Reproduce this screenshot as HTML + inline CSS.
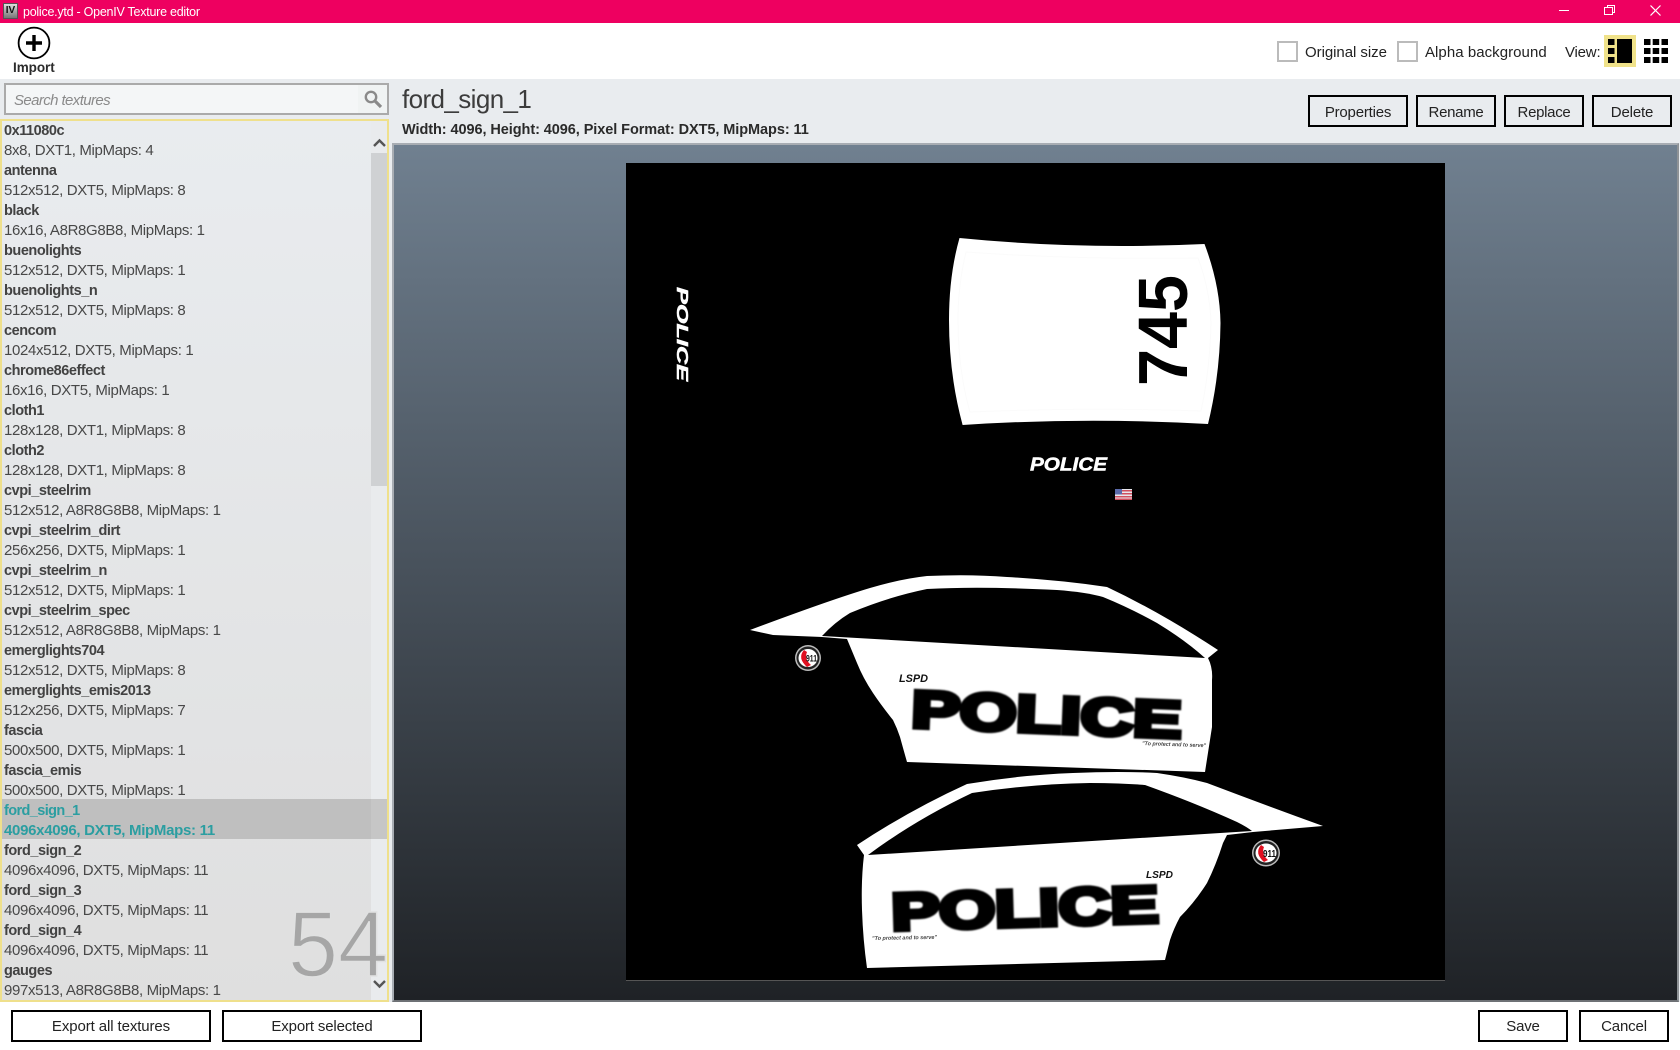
<!DOCTYPE html>
<html><head><meta charset="utf-8"><title>police.ytd - OpenIV Texture editor</title>
<style>
html,body{margin:0;padding:0;width:1680px;height:1050px;overflow:hidden;background:#fff;font-family:"Liberation Sans",sans-serif;color:#222}
.a{position:absolute;box-sizing:border-box}
.btn{position:absolute;box-sizing:border-box;border:2px solid #000;text-align:center;font-size:15px;letter-spacing:-.15px;height:32px;line-height:31px;color:#222}
.cb{position:absolute;box-sizing:border-box;width:21px;height:21px;border:2px solid #bbb;top:41px;background:#fff}
.lab{position:absolute;font-size:15px;top:44px;line-height:18px;color:#222;white-space:nowrap}
#list{position:absolute;left:0;top:119px;width:389px;height:883px;box-sizing:border-box;border:2px solid #efe08c;background:linear-gradient(#e9ecef,#dfdfdf);overflow:hidden}
#rows{position:absolute;left:2px;top:0;width:380px}
#rows b,#rows i{display:block;height:20px;line-height:20px;white-space:nowrap;font-style:normal}
#rows b{font-size:14.5px;letter-spacing:-.45px;color:#424242}
#rows i{font-size:15px;letter-spacing:-.35px;color:#484848}
#rows b.s{color:#2b9ea1;letter-spacing:-.6px}
#rows i.s{color:#2b9ea1;font-weight:bold;letter-spacing:-.3px}
</style></head><body>
<div class="a" style="left:0;top:0;width:1680px;height:23px;background:#ee0060"></div>
<div class="a" style="left:3px;top:3px;width:15px;height:16px;background:linear-gradient(#ddd,#777);border:1px solid #555;font:bold 10px/14px 'Liberation Sans',sans-serif;color:#111;text-align:center">IV</div>
<div class="a" style="left:23px;top:4px;font-size:12.5px;line-height:17px;color:#fff;white-space:nowrap;letter-spacing:-.25px">police.ytd - OpenIV Texture editor</div>
<svg class="a" style="left:1540px;top:0" width="140" height="23" fill="none" stroke="#fff" stroke-width="1">
<path d="M19 10.500H29"/><path d="M64.500 7.500H72.500V14.500H64.500Z M67.500 7.500V5.500H74.500V12.500H72.500"/><path d="M110.500 5.500L120.500 15.500M120.500 5.500L110.500 15.500" stroke-width="1.200"/></svg>

<div class="a" style="left:0;top:79px;width:1680px;height:971px;background:#e9ecef"></div>
<div class="a" style="left:0;top:1002px;width:1680px;height:48px;background:#fff"></div>

<svg class="a" style="left:0;top:23px" width="70" height="56"><circle cx="34" cy="20" r="15.400" fill="#fff" stroke="#000" stroke-width="1.800"/><path d="M34 12V28M26 20H42" stroke="#000" stroke-width="3.400"/></svg>
<div class="a" style="left:13px;top:59px;font-size:13.500px;font-weight:bold;line-height:17px;color:#2c2c2c;letter-spacing:-.05px">Import</div>

<div class="cb" style="left:1277px"></div><div class="lab" style="left:1305px;letter-spacing:-.05px">Original size</div>
<div class="cb" style="left:1397px"></div><div class="lab" style="left:1425px;letter-spacing:.05px">Alpha background</div>
<div class="lab" style="left:1565px;letter-spacing:-.2px">View:</div>
<svg class="a" style="left:1600px;top:30px" width="80" height="40"><rect x="4" y="5" width="32" height="32" fill="#f0e28a"/>
<path d="M8 9h6.500v6H8zM8 18h6.500v6H8zM8 27h6.500v6H8zM17 9h15v24H17zM44 9h6.500v6h-6.500zM52.700 9h6.500v6h-6.500zM61.500 9h6.500v6h-6.500zM44 18h6.500v6h-6.500zM52.700 18h6.500v6h-6.500zM61.500 18h6.500v6h-6.500zM44 27h6.500v6h-6.500zM52.700 27h6.500v6h-6.500zM61.500 27h6.500v6h-6.500z" fill="#000"/></svg>

<div class="a" style="left:4px;top:83px;width:385px;height:32px;border:2px solid #aaa;background:#f4f6f7"></div>
<div class="a" style="left:358px;top:85px;width:29px;height:28px;background:#f0f3f3"></div>
<div class="a" style="left:14px;top:92px;font-size:15px;font-style:italic;color:#8a8a8a;line-height:18px;letter-spacing:-.6px">Search textures</div>
<svg class="a" style="left:362px;top:88px" width="22" height="22" fill="none" stroke="#8a8a8a"><circle cx="9" cy="9" r="5.200" stroke-width="2.400"/><path d="M13 13L19 19" stroke-width="3.200"/></svg>

<div id="list">
<div class="a" style="left:369px;top:0;width:16px;height:881px;background:#e9ebed"></div>
<div class="a" style="left:369px;top:32px;width:16px;height:333px;background:#cfd1d3"></div>
<div class="a" style="left:-2px;top:678px;width:371px;height:40px;background:#bfbfbf"></div>
<div class="a" style="left:369px;top:678px;width:16px;height:40px;background:#c6c6c6"></div>
<div id="rows">
<b>0x11080c</b><i>8x8, DXT1, MipMaps: 4</i>
<b>antenna</b><i>512x512, DXT5, MipMaps: 8</i>
<b>black</b><i>16x16, A8R8G8B8, MipMaps: 1</i>
<b>buenolights</b><i>512x512, DXT5, MipMaps: 1</i>
<b>buenolights_n</b><i>512x512, DXT5, MipMaps: 8</i>
<b>cencom</b><i>1024x512, DXT5, MipMaps: 1</i>
<b>chrome86effect</b><i>16x16, DXT5, MipMaps: 1</i>
<b>cloth1</b><i>128x128, DXT1, MipMaps: 8</i>
<b>cloth2</b><i>128x128, DXT1, MipMaps: 8</i>
<b>cvpi_steelrim</b><i>512x512, A8R8G8B8, MipMaps: 1</i>
<b>cvpi_steelrim_dirt</b><i>256x256, DXT5, MipMaps: 1</i>
<b>cvpi_steelrim_n</b><i>512x512, DXT5, MipMaps: 1</i>
<b>cvpi_steelrim_spec</b><i>512x512, A8R8G8B8, MipMaps: 1</i>
<b>emerglights704</b><i>512x512, DXT5, MipMaps: 8</i>
<b>emerglights_emis2013</b><i>512x256, DXT5, MipMaps: 7</i>
<b>fascia</b><i>500x500, DXT5, MipMaps: 1</i>
<b>fascia_emis</b><i>500x500, DXT5, MipMaps: 1</i>
<b class="s">ford_sign_1</b><i class="s">4096x4096, DXT5, MipMaps: 11</i>
<b>ford_sign_2</b><i>4096x4096, DXT5, MipMaps: 11</i>
<b>ford_sign_3</b><i>4096x4096, DXT5, MipMaps: 11</i>
<b>ford_sign_4</b><i>4096x4096, DXT5, MipMaps: 11</i>
<b>gauges</b><i>997x513, A8R8G8B8, MipMaps: 1</i>
</div>
<svg class="a" style="left:369px;top:0" width="18" height="881" fill="none" stroke="#555" stroke-width="2.400"><path d="M3 25L8.500 19.500L14 25"/><path d="M3 860L8.500 865.500L14 860"/></svg>
<svg class="a" style="left:280px;top:780px" width="107" height="90"><text x="6" y="75" font-size="93" fill="#a6a6a6" stroke="#e0e1e1" stroke-width="1.500" textLength="100" lengthAdjust="spacingAndGlyphs" font-family="Liberation Sans">54</text></svg>
</div>

<div class="a" style="left:402px;top:83px;font-size:26px;line-height:33px;color:#3c3c3c;letter-spacing:-.6px;white-space:nowrap">ford_sign_1</div>
<div class="a" style="left:402px;top:121px;font-size:14.500px;font-weight:bold;line-height:18px;color:#2a2a2a;letter-spacing:-.07px;white-space:nowrap">Width: 4096, Height: 4096, Pixel Format: DXT5, MipMaps: 11</div>
<div class="btn" style="left:1308px;top:95px;width:100px;letter-spacing:-.2px">Properties</div>
<div class="btn" style="left:1416px;top:95px;width:80px;letter-spacing:-.3px">Rename</div>
<div class="btn" style="left:1504px;top:95px;width:80px;letter-spacing:-.3px">Replace</div>
<div class="btn" style="left:1592px;top:95px;width:80px">Delete</div>

<div class="a" style="left:392px;top:143px;width:1287px;height:859px;border:2px solid #a8adb3;border-bottom-color:#6e7175;border-right-color:#8e9296;background:linear-gradient(#708090,#1f2226)"></div>
<div class="a" style="left:626px;top:163px;width:819px;height:818px;background:#000;border-bottom:1px solid #555"></div>

<svg class="a" style="left:0;top:0;pointer-events:none" width="1680" height="1050" font-family="Liberation Sans">
<defs><filter id="bl" x="-5%" y="-20%" width="110%" height="140%"><feGaussianBlur stdDeviation=".7"/></filter></defs>
<path d="M959.500 238Q1080 250 1204.500 244Q1220 285 1220.500 323Q1220 375 1208 424Q1085 417 962.600 425Q949 375 949 320Q949 275 959.500 238Z" fill="#fff"/>
<path d="M966 252Q1080 260 1198 258Q1210 290 1211 323Q1210 370 1201 411Q1085 407 970 412Q958 370 958 320Q958 285 966 252Z" fill="none" stroke="#fbfbfb"/>
<text transform="translate(1187,386) rotate(-90)" font-size="70" font-weight="bold" fill="#000" textLength="111" lengthAdjust="spacingAndGlyphs">745</text>
<text transform="translate(677,287) rotate(90)" font-size="16" font-weight="bold" font-style="italic" fill="#fff" stroke="#fff" stroke-width=".5" textLength="94" lengthAdjust="spacingAndGlyphs">POLICE</text>
<text x="1030" y="470.500" font-size="18" font-weight="bold" font-style="italic" fill="#fff" stroke="#fff" stroke-width=".5" textLength="77" lengthAdjust="spacingAndGlyphs">POLICE</text>
<g><rect x="1115" y="489" width="17" height="11" fill="#e8e8ee"/><path d="M1115 490h17v1.500h-17zM1115 493h17v1.500h-17zM1115 496h17v1.500h-17zM1115 498.500h17v1.500h-17z" fill="#d05060"/><rect x="1115" y="489" width="7" height="5.500" fill="#5a6aaa"/></g>

<path d="M750 630Q830 600 870 588Q900 579 927 576Q970 574 1007 577Q1060 580 1107 587Q1160 612 1218 650L1208 658Q1213 668 1212 680L1212 727L1205 772L907 762Q903 748 900 737Q897 728 893 720Q881 705 873 693Q863 678 857 663L847 639L822 637L773 635Z" fill="#fff"/>
<path d="M822 636Q835 622 850 613Q888 597 927 589Q980 586 1057 590Q1085 592 1103 597Q1130 608 1157 623Q1185 640 1205 658Z" fill="#000"/>
<text transform="translate(911,727) rotate(2.300)" font-size="52" font-weight="bold" fill="#000" stroke="#000" stroke-width="5" stroke-linejoin="miter" textLength="270" lengthAdjust="spacingAndGlyphs" filter="url(#bl)">POLICE</text>
<text x="899" y="682" font-size="11" font-weight="bold" font-style="italic" fill="#111" textLength="29" lengthAdjust="spacingAndGlyphs">LSPD</text>
<text transform="translate(1142,745) rotate(2)" font-size="5.500" font-weight="bold" font-style="italic" fill="#444" textLength="64" lengthAdjust="spacingAndGlyphs">"To protect and to serve"</text>
<g transform="translate(808,658)"><ellipse rx="13" ry="13" fill="#bbb"/><ellipse rx="11.500" ry="11.500" fill="#222"/><ellipse rx="9.500" ry="9" fill="#fff"/><path d="M-4-8Q-11 0-1 9L3 7Q-4 1-1-6Z" fill="#e01020"/><text x="-2" y="3.500" font-size="9.500" font-weight="bold" fill="#111" textLength="11" lengthAdjust="spacingAndGlyphs">911</text></g>

<path d="M857 845Q910 810 967 784Q1020 775 1073 773Q1120 771 1157 773Q1185 777 1207 783Q1265 805 1323 826L1253 832L1227 835L1223 843Q1216 865 1207 883Q1195 902 1180 917Q1174 928 1170 940L1165 960L867 968Q863 940 862 910Q861 880 864 855Z" fill="#fff"/>
<path d="M868 855Q915 820 972 793Q1030 784 1090 783Q1120 783 1145 785Q1170 794 1190 802Q1215 812 1237 822Q1247 827 1252 831Z" fill="#000"/>
<text transform="translate(892,930) rotate(-1.700)" font-size="52" font-weight="bold" fill="#000" stroke="#000" stroke-width="5" textLength="267" lengthAdjust="spacingAndGlyphs" filter="url(#bl)">POLICE</text>
<text x="1146" y="878" font-size="10.500" font-weight="bold" font-style="italic" fill="#111" textLength="27" lengthAdjust="spacingAndGlyphs">LSPD</text>
<text transform="translate(872,940) rotate(-1)" font-size="5.500" font-weight="bold" font-style="italic" fill="#444" textLength="65" lengthAdjust="spacingAndGlyphs">"To protect and to serve"</text>
<g transform="translate(1266,853)"><ellipse rx="14" ry="13.500" fill="#bbb"/><ellipse rx="12.500" ry="12" fill="#222"/><ellipse rx="10.500" ry="9.500" fill="#fff"/><path d="M-5-8Q-12 0-2 9L2 7Q-5 1-2-6Z" fill="#e01020"/><text x="-3" y="4" font-size="10" font-weight="bold" fill="#111" textLength="13" lengthAdjust="spacingAndGlyphs">911</text></g>
</svg>

<div class="btn" style="left:11px;top:1010px;width:200px;line-height:30px;letter-spacing:-.1px">Export all textures</div>
<div class="btn" style="left:222px;top:1010px;width:200px;line-height:30px">Export selected</div>
<div class="btn" style="left:1478px;top:1010px;width:90px;line-height:30px;letter-spacing:-.2px">Save</div>
<div class="btn" style="left:1579px;top:1010px;width:90px;line-height:30px">Cancel</div>
</body></html>
